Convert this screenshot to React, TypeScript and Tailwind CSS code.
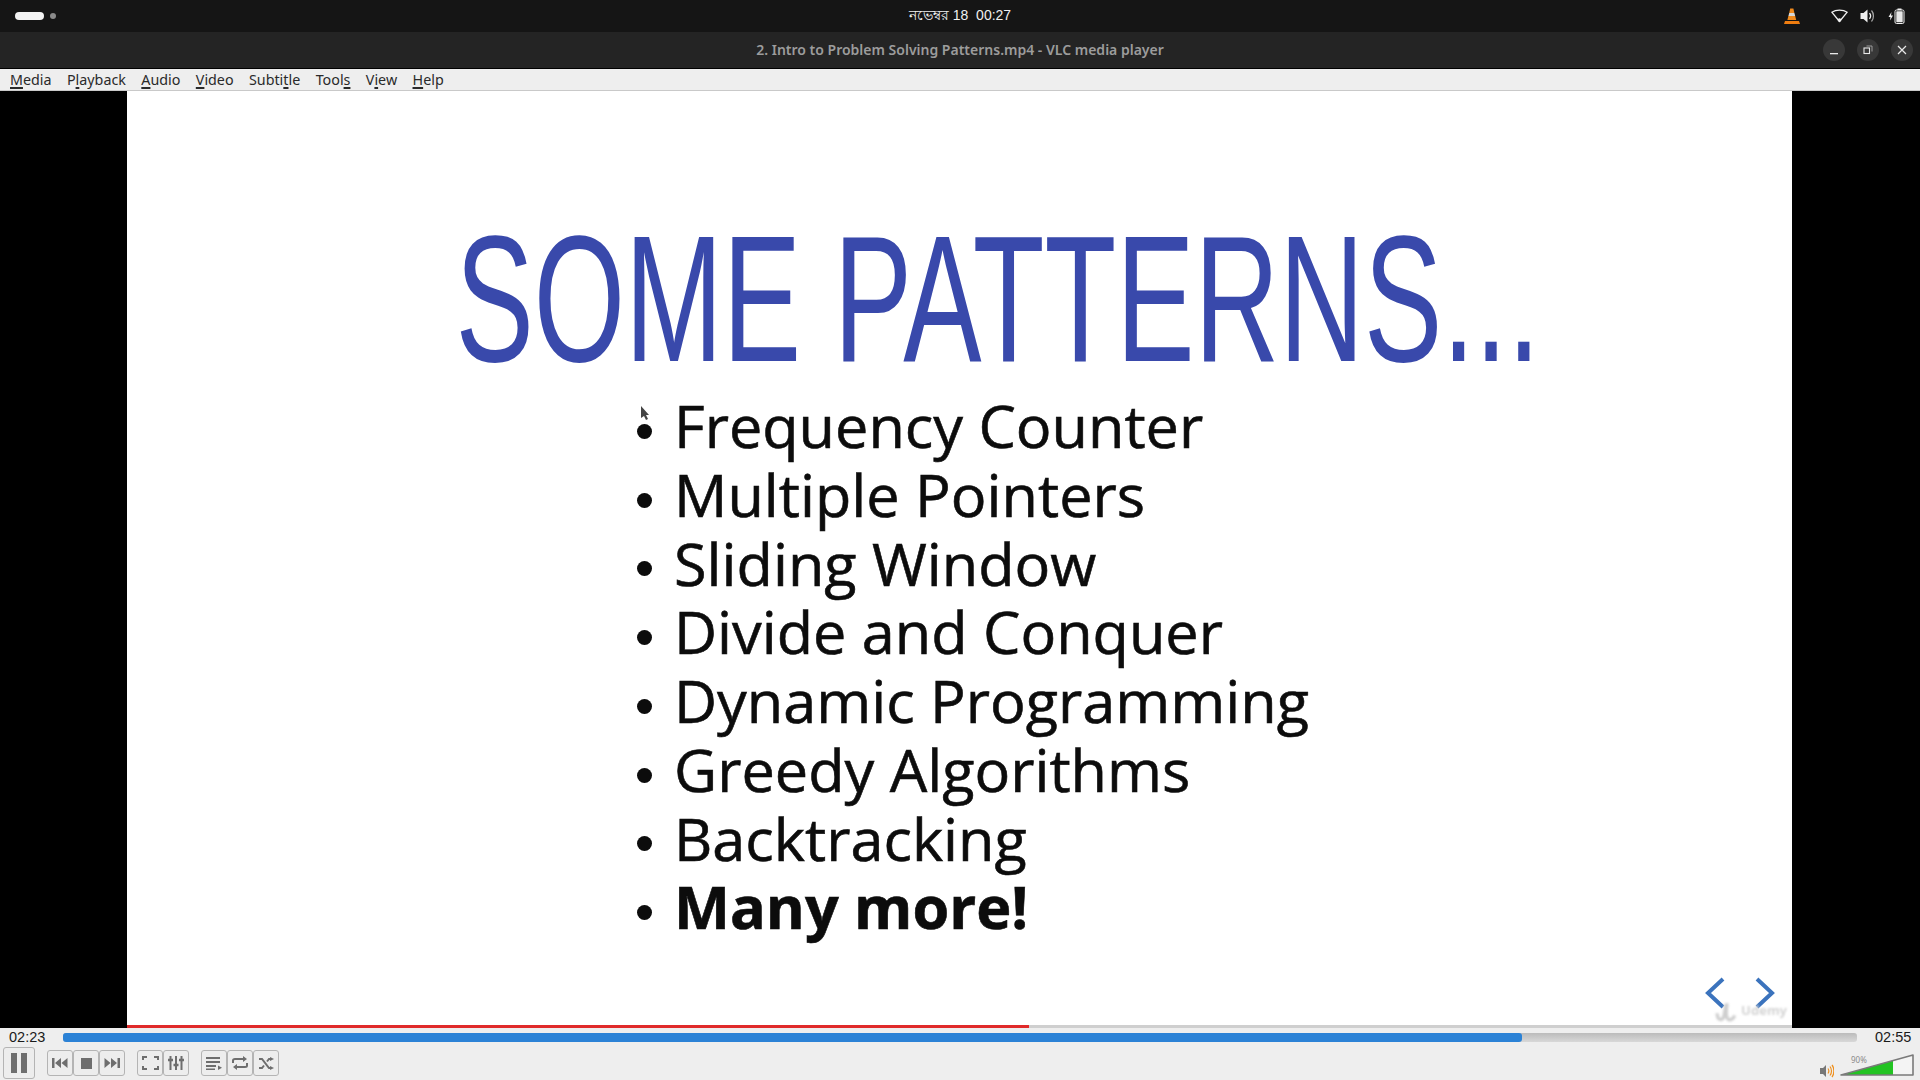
import React from "react";

const items = ["Frequency Counter","Multiple Pointers","Sliding Window","Divide and Conquer","Dynamic Programming","Greedy Algorithms","Backtracking"];

function M({pre="",u,post=""}:{pre?:string;u:string;post?:string}){
  return <span>{pre}<span className="underline decoration-[2px] underline-offset-[2px]">{u}</span>{post}</span>;
}

function Btn({w="w-[26px]",h="h-[26px]",children}:{w?:string;h?:string;children:React.ReactNode}){
  return <div className={`${w} ${h} flex items-center justify-center rounded-[3px] border border-[#b4b4b4] bg-[#ededed]`}>{children}</div>;
}

const G="#6e6e6e";

export default function App(){
  return (
    <div className="w-[1920px] h-[1080px] overflow-hidden flex flex-col bg-[#eeeeee] font-['Noto_Sans',sans-serif]">
      {/* system bar */}
      <div className="h-[32px] bg-[#151515] grid grid-cols-[1fr_auto_1fr] items-center shrink-0">
        <div className="flex items-center">
          <div className="ml-[15px] w-[29px] h-[8px] rounded-full bg-[#f2f2f2]"/>
          <div className="ml-[6px] w-[6px] h-[6px] rounded-full bg-[#8a8a8a]"/>
        </div>
        <div className="text-[14px] leading-[30px] pb-[2px] text-[#f0f0f0] font-['Liberation_Sans','Noto_Sans',sans-serif] whitespace-pre">নভেম্বর 18  00:27</div>
        <div className="flex items-center justify-end">
          <svg width="16" height="17" viewBox="0 0 16 17" className="mr-[31px]">
            <path d="M6.200 0.500h3.200l1 4.500h-5.200z" fill="#f08a1d"/>
            <path d="M5.200 5h5.200l0.800 3h-6.800z" fill="#d8d8d8"/>
            <path d="M4.400 8h6.800l1 4h-8.800z" fill="#f08a1d"/>
            <path d="M1 13h14l1 3H0z" fill="#ef7d10"/>
          </svg>
          <svg width="17" height="14" viewBox="0 0 17 14" className="mr-[12px]" fill="none">
            <path d="M0.800 3.200C5 0.300 12 0.300 16.200 3.200L8.500 12.500z" stroke="#f0f0f0" strokeWidth="1.300" strokeLinejoin="round"/>
            <circle cx="8.500" cy="11" r="1.800" fill="#f0f0f0"/>
          </svg>
          <svg width="16" height="16" viewBox="0 0 16 16" className="mr-[12px]" fill="none">
            <path d="M0.500 5h3l4-3.500v13l-4-3.500h-3z" fill="#f0f0f0"/>
            <path d="M9.500 5.200c1.300 1.600 1.300 4 0 5.600" stroke="#f0f0f0" strokeWidth="1.300"/>
            <path d="M11.500 2.500c2.600 3 2.600 8 0 11" stroke="#a8a8a8" strokeWidth="1.200"/>
          </svg>
          <svg width="17" height="16" viewBox="0 0 17 16" className="mr-[15px]" fill="none">
            <path d="M3.500 4L0.500 9h2L2 12.500 5 7.500H3z" fill="#f0f0f0"/>
            <rect x="7" y="2" width="9" height="13.500" rx="1.500" stroke="#f0f0f0" strokeWidth="1"/>
            <rect x="8.300" y="3.300" width="6.400" height="11" rx="0.500" fill="#e8e8e8"/>
            <rect x="9.500" y="0.500" width="4" height="1.500" fill="#f0f0f0"/>
          </svg>
        </div>
      </div>
      {/* title bar */}
      <div className="h-[36px] bg-[#242424] flex items-center relative shrink-0">
        <div className="flex-1 text-center text-[14px] leading-[34px] font-semibold text-[#9c9c9c]">2. Intro to Problem Solving Patterns.mp4 - VLC media player</div>
        <div className="absolute right-[7px] top-[7px] flex gap-[12px]">
          <div className="w-[22px] h-[22px] rounded-full bg-[#383838] flex items-center justify-center">
            <svg width="10" height="10" viewBox="0 0 10 10"><rect x="1" y="8" width="8" height="1.300" fill="#e8e8e8"/></svg>
          </div>
          <div className="w-[22px] h-[22px] rounded-full bg-[#383838] flex items-center justify-center">
            <svg width="10" height="10" viewBox="0 0 10 10" fill="none"><rect x="1" y="3" width="5.500" height="5.500" stroke="#e8e8e8" strokeWidth="1.100"/><path d="M3.500 1h5.500v5.500" stroke="#9a9a9a"/></svg>
          </div>
          <div className="w-[22px] h-[22px] rounded-full bg-[#383838] flex items-center justify-center">
            <svg width="10" height="10" viewBox="0 0 10 10" fill="none"><path d="M1 1l8 8M9 1l-8 8" stroke="#e8e8e8" strokeWidth="1.200"/></svg>
          </div>
        </div>
      </div>
      <div className="h-[1px] bg-black shrink-0"/>
      {/* menu */}
      <div className="h-[21px] bg-[#eeeeee] flex items-center pl-[10px] gap-[15.400px] text-[14.300px] leading-[21px] text-[#2a2a2a] shrink-0">
        <M u="M" post="edia"/><M pre="P" u="l" post="ayback"/><M u="A" post="udio"/><M u="V" post="ideo"/><M pre="Subti" u="t" post="le"/><M pre="Tool" u="s"/><M pre="V" u="i" post="ew"/><M u="H" post="elp"/>
      </div>
      <div className="h-[1px] bg-[#c9c9c9] shrink-0"/>
      {/* video */}
      <div className="h-[937px] bg-black flex shrink-0">
        <div className="w-[127px]"/>
        <div className="w-[1665px] bg-white relative pt-[120px]">
          <div className="h-[175px] flex justify-center items-center pl-[76px]">
            <div className="text-[#3949ab] text-[180px] leading-none whitespace-nowrap font-['Liberation_Sans',sans-serif] scale-x-[0.652]">SOME PATTERNS...</div>
          </div>
          <div className="pl-[510px] pt-[5px] font-['Open_Sans',sans-serif] text-[59.400px] font-medium leading-[68.750px] text-[#0c0c0c] [-webkit-text-stroke:0.6px_#0c0c0c]">
            {items.map(t=>(
              <div key={t} className="flex items-center">
                <div className="w-[15px] h-[15px] rounded-full bg-[#0c0c0c] mr-[22px] mt-[12px]"/>
                <div>{t}</div>
              </div>
            ))}
            <div className="flex items-center font-bold">
              <div className="w-[15px] h-[15px] rounded-full bg-[#0c0c0c] mr-[22px] mt-[12px]"/>
              <div>Many more!</div>
            </div>
          </div>
          {/* cursor */}
          <svg width="9" height="14" viewBox="0 0 9 14" className="absolute left-[514px] top-[315px]"><path d="M0 0l8 9-3 0 2 4-2 1-2-4-3 2z" fill="#444"/></svg>
          {/* arrows */}
          <svg width="70" height="32" viewBox="0 0 70 32" className="absolute right-[17px] bottom-[19px]" fill="none">
            <path d="M18 2L3 16l15 14M52 2l15 14-15 14" stroke="#3b73bd" strokeWidth="4"/>
          </svg>
          <div className="absolute right-[5px] bottom-[6px] text-[13px] font-bold text-[#d4d4d4] flex items-center gap-[4px] blur-[1px]">
            <svg width="22" height="22" viewBox="0 0 20 20" fill="none" stroke="#cfcfcf" strokeWidth="3"><path d="M2 12c0 7 5 7 6 3l2-11M11 3c-1 7-2 14 2 15 3 0 4-2 5-4"/></svg>
            <span>Udemy</span>
          </div>
          <div className="absolute left-0 right-0 bottom-0 h-[3px] bg-[#cfcfcf]">
            <div className="w-[902px] h-full bg-[#e02a2a]"/>
          </div>
        </div>
        <div className="flex-1"/>
      </div>
      {/* time row */}
      <div className="h-[18px] flex items-center shrink-0 text-[14.500px] text-[#1a1a1a] font-['Liberation_Sans',sans-serif]">
        <div className="w-[63px] pl-[9px] pt-[1px]">02:23</div>
        <div className="w-[1794px] h-[9px] rounded-[3px] overflow-hidden bg-gradient-to-b from-[#bbbbbb] to-[#d8d8d8]">
          <div className="w-[1459px] h-full rounded-r-[3px] bg-[#2b82d6]"/>
        </div>
        <div className="flex-1 pl-[18px] pt-[1px]">02:55</div>
      </div>
      {/* controls */}
      <div className="flex-1 flex items-start relative pl-[3px] pt-[1px]">
        <Btn w="w-[32px]" h="h-[32px]">
          <svg width="16" height="20" viewBox="0 0 16 20"><rect x="0" y="0" width="6" height="20" fill={G}/><rect x="10" y="0" width="6" height="20" fill={G}/></svg>
        </Btn>
        <div className="flex ml-[12px] mt-[3px]">
          <Btn><svg width="16" height="12" viewBox="0 0 16 12" fill={G}><rect x="0" y="1" width="2.500" height="10"/><path d="M9 1v10L3 6zM15.500 1v10L9.500 6z"/></svg></Btn>
          <Btn><svg width="11" height="11" viewBox="0 0 11 11" fill={G}><rect width="11" height="11"/></svg></Btn>
          <Btn><svg width="16" height="12" viewBox="0 0 16 12" fill={G}><rect x="13.500" y="1" width="2.500" height="10"/><path d="M0.500 1v10l6-5zM7 1v10l6-5z"/></svg></Btn>
        </div>
        <div className="flex ml-[12px] mt-[3px]">
          <Btn><svg width="17" height="14" viewBox="0 0 17 14" fill="none" stroke={G} strokeWidth="2"><path d="M1 4V1h4M12 1h4v3M16 10v3h-4M5 13H1v-3"/></svg></Btn>
          <Btn><svg width="16" height="14" viewBox="0 0 16 14" fill="none" stroke={G} strokeWidth="2"><path d="M2.500 0v14M8 0v14M13.500 0v14"/><path d="M0 4h5M5.500 9h5M11 4h5" strokeWidth="2.500"/></svg></Btn>
        </div>
        <div className="flex ml-[12px] mt-[3px]">
          <Btn><svg width="16" height="13" viewBox="0 0 16 13" fill={G}><rect width="14" height="2"/><rect y="4" width="14" height="2"/><rect y="8" width="10" height="2"/><rect y="11.500" width="9" height="1.500"/><path d="M12 8.500v4.500l4-2.250z"/></svg></Btn>
          <Btn><svg width="16" height="14" viewBox="0 0 16 14" fill="none" stroke={G} strokeWidth="2"><path d="M1 7V4.500Q1 3 3 3h10M15 7v2.500Q15 11 13 11H3"/><path d="M11 0l4 3-4 3zM5 8l-4 3 4 3z" fill={G} stroke="none"/></svg></Btn>
          <Btn><svg width="15" height="13" viewBox="0 0 15 13" fill="none" stroke={G} strokeWidth="2"><path d="M0 2h3l7 9h2M0 11h3l2-2.500M8 4.500 10 2h2"/><path d="M11 0l4 2-4 2zM11 9l4 2-4 2z" fill={G} stroke="none"/></svg></Btn>
        </div>
        <div className="flex-1"/>
        <svg width="14" height="14" viewBox="0 0 14 14" className="absolute left-[1820px] top-[18px]" fill="none">
          <path d="M0 4h3l3-3v12l-3-3H0z" fill="#777"/>
          <path d="M8 4.500c1 1.500 1 3.500 0 5M10 2.500c2 2.500 2 6.500 0 9M12 1c2.500 3 2.500 9 0 12" stroke="#ef8f1c" strokeWidth="1.200"/>
        </svg>
        <svg width="76" height="23" viewBox="0 0 76 23" className="absolute left-[1840px] top-[8px]">
          <path d="M1 21L73 1v20z" fill="#f4f4f4"/>
          <path d="M1 21L53 6.600V21z" fill="#22c322"/>
          <path d="M1 21L73 1v20z" fill="none" stroke="#7a7a7a" strokeWidth="1.600" strokeLinejoin="round"/>
        </svg>
        <div className="absolute left-[1851px] top-[9px] text-[8px] leading-[10px] text-[#8a8a8a]">90%</div>
      </div>
    </div>
  );
}
